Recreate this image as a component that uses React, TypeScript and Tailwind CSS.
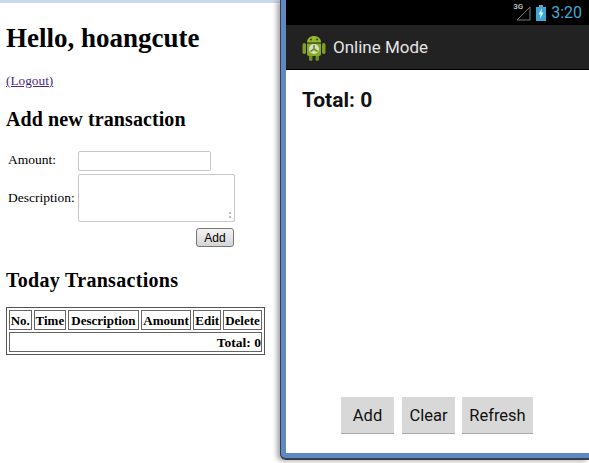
const serif = "font-['Liberation_Serif',serif]";

function AndroidIcon() {
  return (
    <svg width="24" height="28" viewBox="0 0 24 28">
      <rect x="0.5" y="9" width="3.5" height="11" rx="1.7" fill="#7f9f22" />
      <rect x="20" y="9" width="3.5" height="11" rx="1.7" fill="#7f9f22" />
      <rect x="7" y="20" width="3.5" height="7" rx="1.7" fill="#6f8f1c" />
      <rect x="13.5" y="20" width="3.5" height="7" rx="1.7" fill="#6f8f1c" />
      <path d="M5 8.5C5 4.5 8 2 12 2s7 2.5 7 6.500z" fill="#97b82e" />
      <path d="M5 9.500h14V20a2 2 0 0 1-2 2H7a2 2 0 0 1-2-2z" fill="#88a926" />
      <circle cx="9" cy="5.500" r="0.9" fill="#26300a" />
      <circle cx="15" cy="5.500" r="0.9" fill="#26300a" />
      <circle cx="12" cy="15" r="5" fill="#d9dfc6" />
      <path d="M12 15V11M12 15l-3.500 2.500M12 15l3.500 2.500" stroke="#6f8f1c" strokeWidth="1.600" />
    </svg>
  );
}

function StatusBar() {
  return (
    <div className="h-[25px] bg-black flex items-center justify-end pr-[7px] shrink-0">
      <div className="relative w-[15px] h-[16px] mr-[5px]">
        <svg width="15" height="16" viewBox="0 0 15 16" className="absolute top-0 left-0">
          <path d="M14 2V15H1z" fill="none" stroke="#77797a" strokeWidth="1" />
        </svg>
        <span className="absolute top-[-4px] left-[-3px] text-[8px] font-bold text-[#b5b5b5] font-['Roboto',sans-serif]">
          3G
        </span>
      </div>
      <svg width="10" height="16" viewBox="0 0 10 16" className="mr-[5px]">
        <rect x="3" y="0" width="4" height="2" fill="#8a9aa0" />
        <rect x="0" y="2" width="10" height="14" fill="#3aa7d8" />
        <path d="M6 3L2.500 9.500h2.200L3.800 14 7.500 7.500H5.300z" fill="#e6f6fc" />
      </svg>
      <span className="text-[16px] leading-none text-[#3fa9d6] font-['Roboto',sans-serif]">3:20</span>
    </div>
  );
}

function PhoneWindow() {
  const btn = "h-[37px] pt-[2px] bg-[#d8d8d8] border-b border-[#a9a9a9] text-[16.500px] text-[#111111]";
  return (
    <div className="absolute top-0 left-[280px] w-[309px] h-[460px] bg-[#5f89c4] border-l border-b-2 border-[#3a3f47] rounded-bl-[6px] pl-[5px] pb-[5px] shadow-[-3px_1px_5px_rgba(0,0,0,0.35)]">
      <div className="h-full bg-white flex flex-col font-['Roboto',sans-serif]">
        <StatusBar />
        <div className="h-[45px] pt-[2px] bg-[#222222] border-b border-black flex items-center pl-[16px] gap-[7px] shrink-0">
          <AndroidIcon />
          <span className="text-[#e4e4e4] text-[17px]">Online Mode</span>
        </div>
        <div className="flex-1 flex flex-col justify-between pb-[19px]">
          <div className="pl-[16px] pt-[18px] text-[21px] leading-[24px] font-bold text-[#111111]">
            Total: 0
          </div>
          <div className="flex pl-[55px]">
            <button className={`${btn} w-[53px] mr-[8px]`}>Add</button>
            <button className={`${btn} w-[53px] mr-[7px]`}>Clear</button>
            <button className={`${btn} w-[71px]`}>Refresh</button>
          </div>
        </div>
      </div>
    </div>
  );
}

function TransactionsTable() {
  const th = "border border-[#666666] p-0 font-bold h-[20px] whitespace-nowrap";
  return (
    <table className="border border-[#555555] border-separate border-spacing-[2px] text-[13px] leading-[15px] w-[259px] mt-[15px]">
      <tbody>
        <tr>
          <th className={th}>No.</th>
          <th className={th}>Time</th>
          <th className={th}>Description</th>
          <th className={th}>Amount</th>
          <th className={th}>Edit</th>
          <th className={th}>Delete</th>
        </tr>
        <tr>
          <th colSpan={6} className={`${th} text-right text-[13.500px]`}>
            Total: 0
          </th>
        </tr>
      </tbody>
    </table>
  );
}

function WebPage() {
  return (
    <div className={`h-[463px] w-[280px] bg-white text-black ${serif}`}>
      <div className="h-[3px] bg-[#c9d9ea]" />
      <div className="pl-[6px]">
        <h1 className="text-[27px] leading-[30px] font-bold mt-[20px]">Hello, hoangcute</h1>
        <a className="block text-[13.300px] leading-[16px] text-[#4b2a86] underline mt-[20px]">(Logout)</a>
        <h2 className="text-[20px] leading-[23px] font-bold mt-[19px] tracking-[0.1px]">Add new transaction</h2>
        <div className="mt-[19px] text-[13.500px]">
          <div className="flex items-center h-[21px]">
            <span className="w-[72px] pl-[2px]">Amount:</span>
            <input className="w-[133px] h-[20px] border border-[#c8c8c8] rounded-[2px] bg-white" />
          </div>
          <div className="flex items-center mt-[3px]">
            <span className="w-[72px] pl-[2px]">Description:</span>
            <div className="relative w-[157px] h-[48px] border border-[#c8c8c8] rounded-[2px]">
              <span className="absolute right-[3px] bottom-[3px] w-[6px] h-[6px] border-r-2 border-dotted border-[#bbbbbb]" />
            </div>
          </div>
          <div className="flex justify-end w-[228px] mt-[6px]">
            <button className="w-[38px] h-[19px] border border-[#777777] rounded-[3px] bg-gradient-to-b from-[#f4f4f4] to-[#d4d4d4] text-[12px] leading-none font-['Liberation_Sans',sans-serif]">
              Add
            </button>
          </div>
        </div>
        <h2 className="text-[20px] leading-[23px] font-bold mt-[22px] tracking-[0.3px]">Today Transactions</h2>
        <TransactionsTable />
      </div>
    </div>
  );
}

export default function App() {
  return (
    <div className="relative w-[589px] h-[463px] overflow-hidden bg-white">
      <WebPage />
      <PhoneWindow />
    </div>
  );
}
